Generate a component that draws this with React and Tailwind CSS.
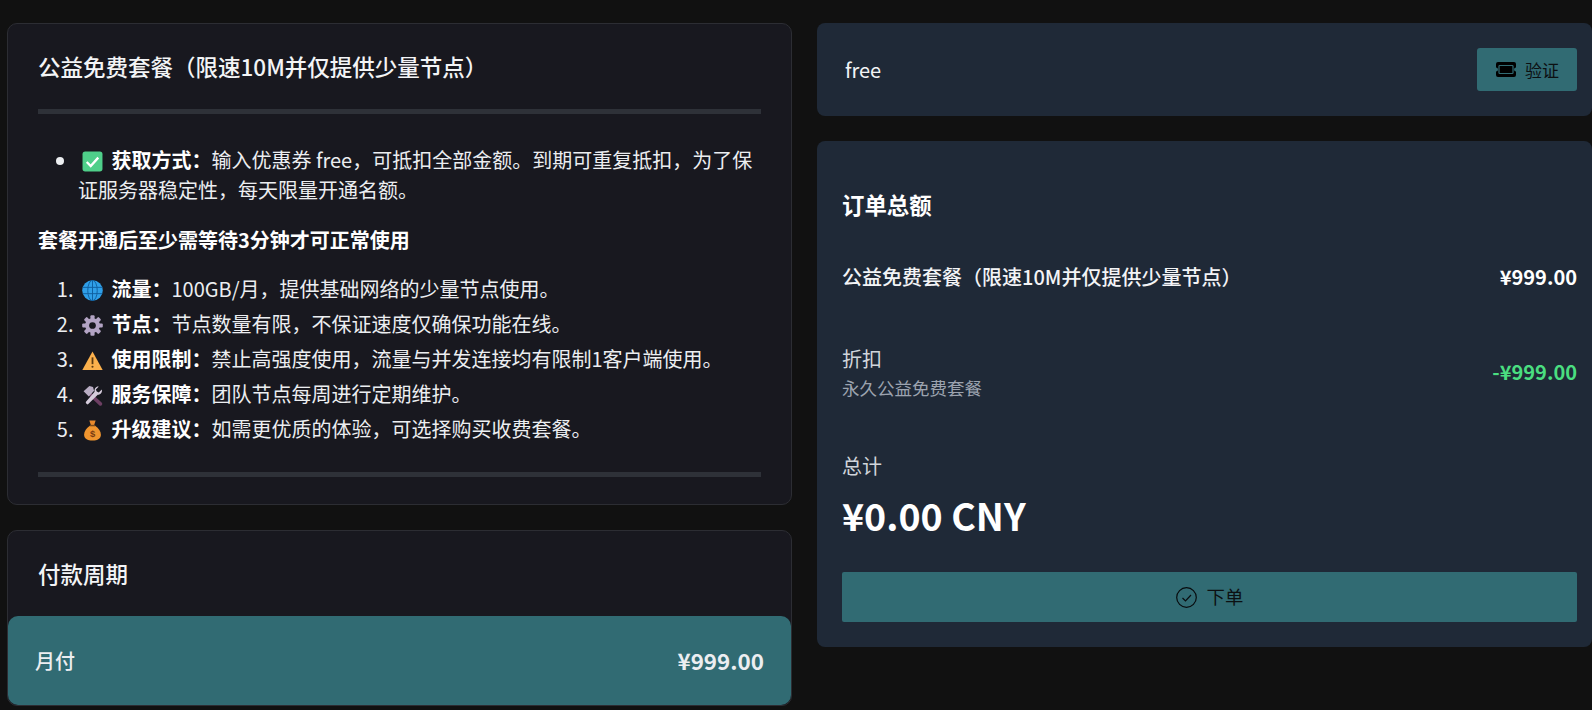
const Check = () => (
  <svg viewBox="0 0 20 20" className="inline-block w-[21px] h-[21px] align-[-4px] ml-[4px] mr-[4px]">
    <rect x="0.5" y="0.5" width="19" height="19" rx="2.5" fill="#4fcf8a" />
    <path d="M4.5 10.5l3.8 3.8 7.2-8" fill="none" stroke="#fff" strokeWidth="2.2" />
  </svg>
);

const Globe = () => (
  <svg viewBox="0 0 20 20" className="inline-block w-[21px] h-[21px] align-[-4px] ml-[4px] mr-[4px]">
    <circle cx="10" cy="10" r="9.8" fill="#2f9fe8" />
    <g fill="none" stroke="#0f5f9e" strokeWidth="0.9">
      <ellipse cx="10" cy="10" rx="4.5" ry="9.8" />
      <path d="M10 .2v19.600M.8 7h18.4M.8 13h18.4" />
    </g>
  </svg>
);

const Gear = () => (
  <svg viewBox="0 0 20 20" className="inline-block w-[21px] h-[21px] align-[-4px] ml-[4px] mr-[4px]">
    <g fill="#b3a4c4">
      <circle cx="10" cy="10" r="7" />
      <rect x="8" y="0.2" width="4" height="19.600" rx="1" />
      <rect x="8" y="0.2" width="4" height="19.600" rx="1" transform="rotate(45 10 10)" />
      <rect x="8" y="0.2" width="4" height="19.600" rx="1" transform="rotate(90 10 10)" />
      <rect x="8" y="0.2" width="4" height="19.600" rx="1" transform="rotate(135 10 10)" />
    </g>
    <circle cx="10" cy="10" r="3.2" fill="#18181f" />
  </svg>
);

const Warn = () => (
  <svg viewBox="0 0 20 20" className="inline-block w-[21px] h-[21px] align-[-4px] ml-[4px] mr-[4px]">
    <path d="M10 1.5L19.7 19H.3z" fill="#fbb04c" strokeLinejoin="round" />
    <path d="M10 7v6.5" stroke="#5c3a10" strokeWidth="1.7" />
    <circle cx="10" cy="16" r="1" fill="#5c3a10" />
  </svg>
);

const Tools = () => (
  <svg viewBox="0 0 20 20" className="inline-block w-[21px] h-[21px] align-[-4px] ml-[4px] mr-[4px]">
    <path d="M7.5 8.5l10 9.5" stroke="#6d3f63" strokeWidth="3.400" strokeLinecap="round" />
    <path d="M1.500 6L7 1l3.500 1 1 3.500L6.500 11z" fill="#b9adc4" />
    <path d="M16 1.500l-2.800 2.800.8 2 2 .8L18.800 4.400c.8 2.400-.8 5-3.800 5L6 18.200c-1 1-3.200-1.200-2.200-2.200L12 6.500C11.500 3.500 13.500 1 16 1.500z" fill="#d6ccdc" />
  </svg>
);

const Bag = () => (
  <svg viewBox="0 0 20 20" className="inline-block w-[21px] h-[21px] align-[-4px] ml-[4px] mr-[4px]">
    <path d="M7 .5h6l-1.500 4.500h-3z" fill="#e8892c" />
    <path d="M7.500 5.500h5C16 8 18 11 18 14c0 3.500-3 5.500-8 5.500S2 17.500 2 14c0-3 2-6 5.500-8.500z" fill="#f0952f" />
    <rect x="7.500" y="4.600" width="5" height="1.400" fill="#7a4a1c" />
    <text x="10" y="16" textAnchor="middle" fontSize="9" fontWeight="700" fill="#7a3b12" fontFamily="Liberation Sans">$</text>
  </svg>
);

const items = [
  [Globe, "流量：", "100GB/月，提供基础网络的少量节点使用。"],
  [Gear, "节点：", "节点数量有限，不保证速度仅确保功能在线。"],
  [Warn, "使用限制：", "禁止高强度使用，流量与并发连接均有限制1客户端使用。"],
  [Tools, "服务保障：", "团队节点每周进行定期维护。"],
  [Bag, "升级建议：", "如需更优质的体验，可选择购买收费套餐。"],
];

export default function App() {
  return (
    <div className="h-[710px] overflow-hidden bg-[#111111] text-[#eceef1] font-['Noto_Sans_CJK_SC',sans-serif]">
      <div className="flex items-start gap-[25px] pl-[7px] pt-[23px]">
        {/* left column */}
        <div className="w-[785px] shrink-0">
          <div className="h-[482px] rounded-[10px] border border-[#2c2d33] bg-[#18181f] px-[30px] pt-[22px] text-[20px]">
            <h3 className="text-[22.500px] leading-[40px] font-medium text-[#f3f4f6]">公益免费套餐（限速10M并仅提供少量节点）</h3>
            <div className="mt-[23px] h-[5px] bg-[#2e3138]" />
            <ul className="mt-[31px] list-disc pl-[40px] leading-[30px]">
              <li>
                <Check /> <b className="font-bold text-white">获取方式：</b>输入优惠券 free，可抵扣全部金额。到期可重复抵扣，为了保证服务器稳定性，每天限量开通名额。
              </li>
            </ul>
            <p className="mt-[20px] leading-[30px] font-bold text-white">套餐开通后至少需等待3分钟才可正常使用</p>
            <ol className="mt-[16px] list-decimal pl-[40px] leading-[35px]">
              {items.map(([Icon, title, text]) => (
                <li key={title}>
                  <Icon /> <b className="font-bold text-white">{title}</b>{text}
                </li>
              ))}
            </ol>
            <div className="mt-[26px] h-[5px] bg-[#2e3138]" />
          </div>
          <div className="mt-[25px] h-[176px] rounded-[10px] border border-[#2c2d33] bg-[#18181f]">
            <h3 className="pl-[30px] pt-[22px] text-[22.500px] leading-[40px] font-medium text-[#f3f4f6]">付款周期</h3>
            <div className="mt-[23px] flex h-[89px] items-center justify-between rounded-[10px] bg-[#316b73] px-[27px]">
              <span className="text-[20px] font-medium">月付</span>
              <span className="text-[22.400px] font-bold">¥999.00</span>
            </div>
          </div>
        </div>

        {/* right column */}
        <div className="flex-1">
          <div className="flex h-[93px] items-center justify-between rounded-[8px] bg-[#1f2937] pl-[28px] pr-[15px]">
            <span className="text-[20px] text-[#f3f4f6]">free</span>
            <button className="flex h-[43px] w-[100px] items-center justify-center gap-[8px] rounded-[3px] bg-[#316b73] text-[17px] text-[#0c1012]">
              <svg viewBox="0 0 22 15" className="w-[22px] h-[15px]">
                <path fillRule="evenodd" d="M3 0h16a2 2 0 0 1 2 2v3.500a2 2 0 0 0 0 4V13a2 2 0 0 1-2 2H3a2 2 0 0 1-2-2V9.500a2 2 0 0 0 0-4V2a2 2 0 0 1 2-2z" fill="#000" />
                <rect x="4" y="3.500" width="14" height="8" rx="0.800" fill="none" stroke="#316b73" strokeWidth="1.200" />
              </svg>
              验证
            </button>
          </div>
          <div className="mt-[25px] h-[506px] rounded-[8px] bg-[#1f2937] pl-[25px] pr-[15px] pt-[43px]">
            <h3 className="text-[22.400px] leading-[40px] font-bold text-white">订单总额</h3>
            <div className="mt-[35px] flex items-center justify-between leading-[36px]">
              <span className="text-[20px] font-medium text-[#f3f4f6]">公益免费套餐（限速10M并仅提供少量节点）</span>
              <span className="text-[20px] font-bold text-white">¥999.00</span>
            </div>
            <div className="mt-[49px] flex items-center justify-between">
              <div>
                <div className="text-[20px] leading-[30px] text-[#d1d5db]">折扣</div>
                <div className="text-[17.500px] leading-[27px] text-[#9ca3af]">永久公益免费套餐</div>
              </div>
              <span className="relative -top-px text-[20px] font-bold text-[#4ade80]">-¥999.00</span>
            </div>
            <div className="mt-[50px] text-[20px] leading-[30px] text-[#d1d5db]">总计</div>
            <div className="mt-[6px] text-[37.500px] leading-[56px] font-bold text-white">¥0.00 CNY</div>
            <button className="mt-[29px] flex h-[50px] w-full items-center justify-center gap-[10px] rounded-[2px] bg-[#316b73] text-[18.400px] text-[#0c1012]">
              <svg viewBox="0 0 21 21" className="w-[21px] h-[21px]" fill="none" stroke="#080c0e" strokeWidth="1.200">
                <circle cx="10.500" cy="10.500" r="9.800" />
                <path d="M6.500 11l3 3 5.500-6" />
              </svg>
              下单
            </button>
          </div>
        </div>
      </div>
    </div>
  );
}
